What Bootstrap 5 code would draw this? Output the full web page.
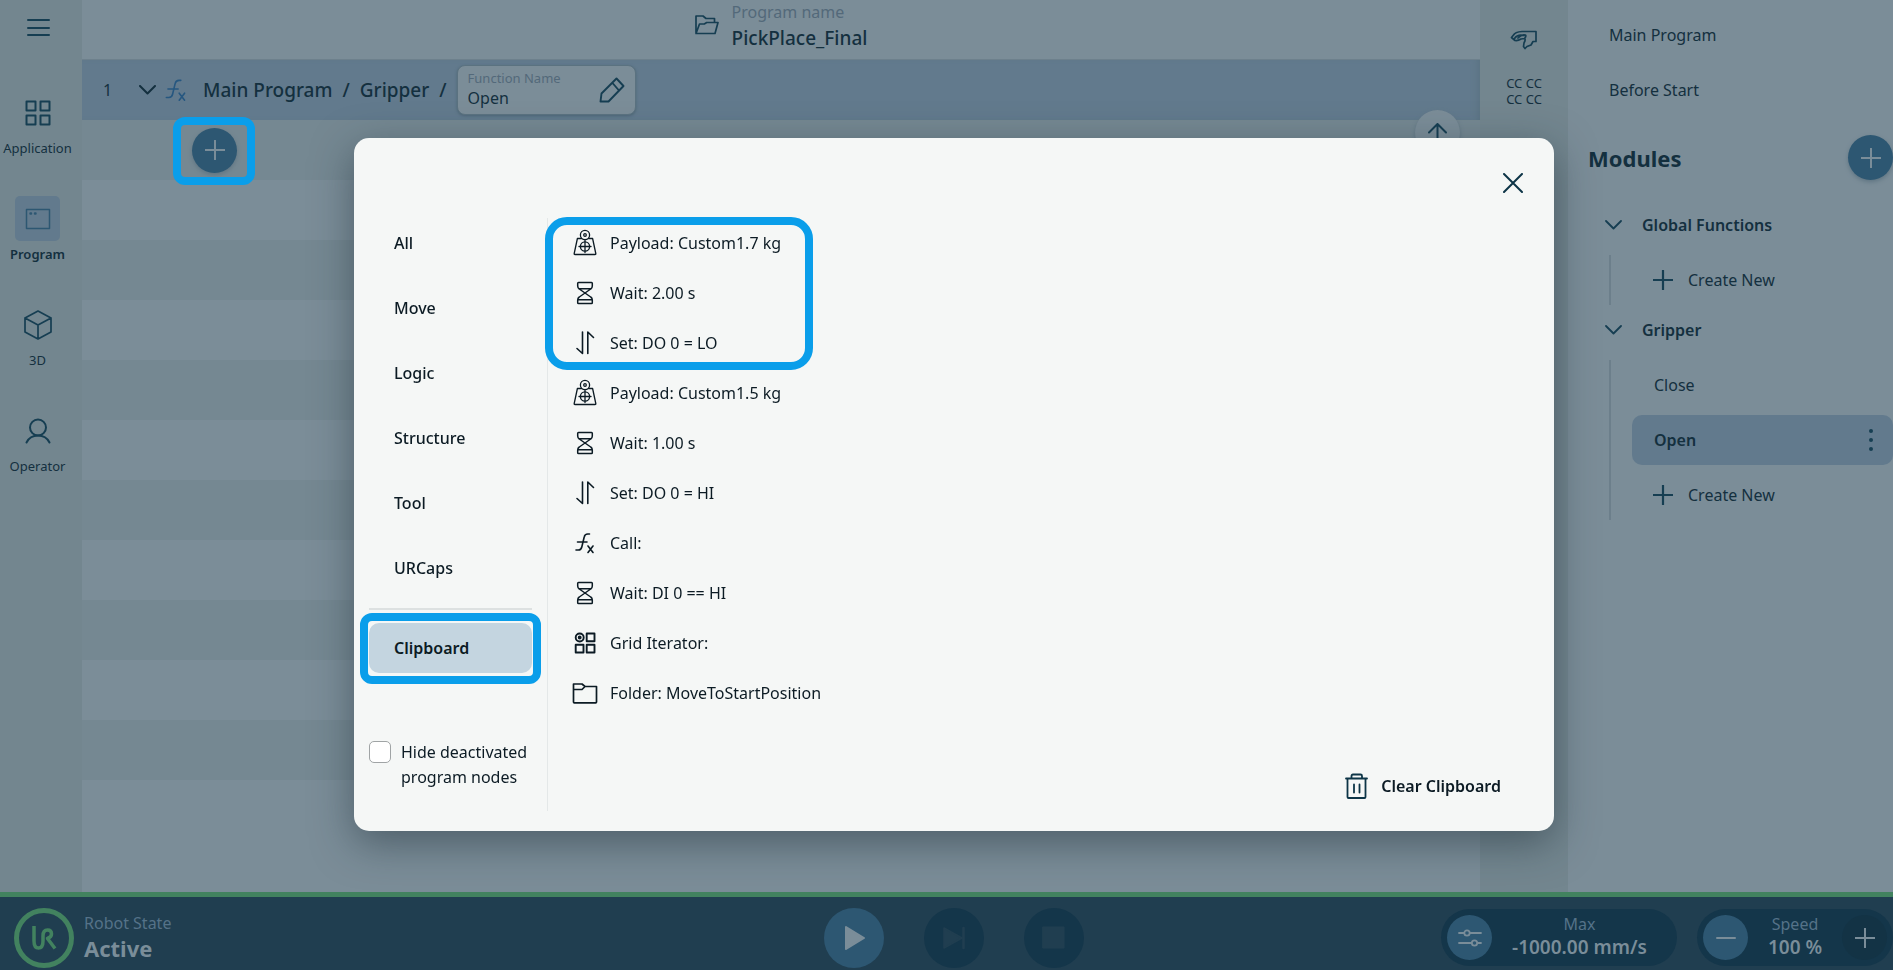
<!DOCTYPE html>
<html lang="en">
<head>
<meta charset="utf-8">
<meta name="viewport" content="width=device-width, initial-scale=1">
<title>PickPlace_Final</title>
<link rel="stylesheet" href="https://cdn.jsdelivr.net/npm/bootstrap@5.3.0/dist/css/bootstrap.min.css">
<style>
:root{--ink:#14303f;--icon:#163e52;--mute:#53697a;--pane:#7b8d98;--stripe:#758892;--rail:#73868f;--sel:#627a8d;--btn:#2d5772;--mark:#0a9eea;--foot:#203e50;--pill:#14364a;--soft:#7a8d99;--green:#42825f}
body{font-family:"Noto Sans",sans-serif;font-size:16px;line-height:24px;color:var(--ink);background:var(--pane);min-height:100vh;overflow:hidden}
svg{display:block;fill:none;stroke:currentColor;stroke-linecap:round;stroke-linejoin:round;flex:none}
button{font:inherit;color:inherit;background:none;border:0;padding:0}
a{color:inherit;text-decoration:none}
.ic{color:var(--icon)}
.solid{fill:currentColor}
.rail{width:82px;background:var(--rail);padding:16px 7px 0 0}
.rail-menu{height:24px;margin-bottom:50px;color:var(--icon)}
.rail-item{height:106px;width:76px;font-size:13px;line-height:20px}
.rail-icon{width:45px;height:45px;border-radius:5px;color:var(--icon);margin-bottom:3px}
.rail-item.active{font-weight:600}
.rail-item.active .rail-icon{background:var(--sel);color:var(--btn)}
.topbar{height:60px;border-bottom:1px solid #6d808c;gap:13px}
.topbar svg{margin-top:15px}
.cap{color:var(--mute)}
.title-name{font-size:19px;line-height:28px;font-weight:500}
.crumbs{height:60px;background:var(--sel);font-size:19px;font-weight:500;padding-left:21px;box-shadow:inset -6px 0 6px -4px #5a7382}
.crumbs .line-no{width:36px;font-size:16px;font-weight:400}
.fx-mark{color:#265780;margin:0 12px 0 5px}
.slash{margin:0 10px}
.fname{width:179px;height:50px;background:var(--pane);border:1px solid #5b7280;border-radius:8px;padding:0 10px;box-shadow:0 1px 3px #4d6675;font-weight:400}
.fname label{font-size:13px;line-height:20px;color:var(--mute)}
.fname input{width:100px;border:0;background:none;padding:0;font-size:16px;line-height:20px;height:20px;color:var(--ink);outline:0}
.prog-row{height:60px}
.prog-row:nth-child(odd){background:var(--stripe)}
.round{width:45px;height:45px;border-radius:50%;background:var(--btn);color:var(--soft);box-shadow:0 2px 4px #5f7583}
.ringed{position:relative}
.ringed::after{content:"";position:absolute;border:8px solid var(--mark);pointer-events:none}
.ring-add{margin-left:110px}
.ring-add::after{inset:-11px -18px -12px -19px;border-radius:12px}
.to-top{position:absolute;right:20px;top:110px;background:var(--pane);color:var(--icon)}
.strip{width:88px;background:var(--rail);padding-top:29px;font-size:13px;line-height:16px}
.modules{width:325px;padding-top:10px}
.m-row{height:50px}
.m-link{padding-left:41px;margin-bottom:5px}
.m-head{margin:20px 0 20px 20px;height:45px}
.m-toggle{margin:0 0 5px 37px;gap:20px;font-weight:600}
.m-row.open{background:var(--sel);border-radius:10px;font-weight:600}
.m-group{border-left:2px solid #6c7f8b;margin-left:41px;padding-left:21px;gap:5px}
.m-group .m-row{padding-left:22px}
.m-group .m-row.new{padding-left:21px;gap:15px}
.m-title{font-size:22px;font-weight:700}
.dots{fill:var(--icon);stroke:none}
.statusbar{height:78px;background:var(--foot);border-top:5px solid var(--green);padding:8px 0 0 14px;color:var(--soft)}
.statusbar .cap{color:#557288}
.side{flex:1 1 0}
.robot{gap:10px}
.logo{color:var(--green)}
.state{font-size:22px;line-height:26px;font-weight:700}
.plays{gap:40px}
.play{width:60px;height:60px;border-radius:50%;background:var(--pill);color:var(--foot)}
.play.on{background:var(--btn);color:var(--soft)}
.pills{gap:20px}
.pill{height:57px;border-radius:29px;background:var(--pill);padding:0 6px}
.pill-max{width:236px}
.pill-speed{width:196px}
.pill .round{box-shadow:none}
.pill .round.off{background:#133345}
.pill .value{font-size:19px;line-height:24px;font-weight:600}
.pill .cap{line-height:22px}
.scrim{position:fixed;inset:0;padding:0 0 2px 15px}
.dialog{width:1200px;background:#f5f7f6;border-radius:15px;padding:80px 53px 20px 15px;color:#0c1b24;box-shadow:0 12px 40px rgba(30,45,55,.5);position:relative}
.close-x{position:absolute;top:30px;right:26px;width:30px;height:30px;color:#0d3547}
.cats{width:179px;border-right:1px solid #e4e8e8;padding:0 15px 21px 0}
.cat-list{gap:15px}
.cat{height:50px;padding-left:25px;font-weight:500;text-align:left;border-radius:10px;width:100%}
.cat.active{background:#c4d5e0;font-weight:600}
.rule{height:2px;margin-bottom:-2px;background:#dde1e1}
.ring-cat::after{inset:-10px -9px -11px -9px;border-radius:12px}
.hide{margin-top:67px;line-height:25px;gap:10px}
.hide .form-check-input{width:22px;height:22px;margin:1px 0 0;border:1px solid #a0a4a5;border-radius:5px;flex:none;background-color:#fff}
.clip{height:50px;padding-left:23px;gap:11px;width:100%}
.clip svg{width:28px;height:28px}
.ring-list{width:260px}
.ring-list::after{inset:-1px -5px -2px -3px;border-radius:22px}
.clear{font-weight:600;gap:11px;height:50px;margin-top:43px}
.clear svg{color:#0d3547}
</style>
</head>
<body class="d-flex flex-column">
<svg width="0" height="0" class="position-absolute" aria-hidden="true">
<symbol id="plus" viewBox="0 0 20 20"><path d="M10 .5v19M.5 10h19"/></symbol>
<symbol id="chev" viewBox="0 0 17 10"><path d="M1 1l7.500 7.500L16 1"/></symbol>
<symbol id="weight" viewBox="0 0 28 28"><circle cx="14" cy="6" r="4.600"/><circle cx="14" cy="6" r="1.300"/><path d="M10.500 9.500H6.400L3.200 24.500q-.2 1 .8 1h20q1 0 .8-1L21.600 9.500h-4.100"/><circle cx="14" cy="17.500" r="4.600"/><path d="M14 11.500v12M8 17.500h12"/></symbol>
<symbol id="glass" viewBox="0 0 28 28"><path d="M7.500 3.500h13q.8 0 .8.800v2.700q0 2-1.600 3L14 14l-5.700-4Q6.700 9 6.700 7V4.300q0-.8.8-.8zM8.200 9.700h11.600M14 14l5.700 4q1.600 1 1.600 3v2.700q0 .8-.8.800h-13q-.8 0-.8-.8V21q0-2 1.600-3zM7 20.700h14"/></symbol>
<symbol id="swap" viewBox="0 0 28 28"><path d="M11.500 3v21.500L6 19.500M16.800 24.500V3l5.700 5.500"/></symbol>
<symbol id="fx" viewBox="0 0 28 28"><path d="M18.500 5h-1.700q-3 0-3.600 3l-2.400 10q-.7 3-3.400 3H5M6.500 13H16M17 17l5 6.500M22 17l-5 6.500"/></symbol>
<symbol id="grid" viewBox="0 0 28 28"><circle cx="8.700" cy="8.500" r="4"/><circle cx="8.700" cy="8.500" r="1" fill="currentColor"/><path d="M15.700 4.500h7.800v7.800h-7.800zM4.700 15.700h7.800v7.800H4.700zM15.700 15.700h7.800v7.800h-7.800z"/></symbol>
<symbol id="folder" viewBox="0 0 28 28"><path d="M2.500 5h8.500l3 2.500h11.500v15.500q0 .8-.8.800H3.300q-.8 0-.8-.8zM2.500 10.500h8.500l3-3"/></symbol>
</svg>

<div class="d-flex flex-grow-1">
  <nav class="rail d-flex flex-column align-items-center" aria-label="Views">
    <button class="rail-menu" aria-label="Menu"><svg width="24" height="24" stroke-width="2"><path d="M2 4h21M2 12h21M2 19h21"/></svg></button>
    <a href="#" class="rail-item d-flex flex-column align-items-center"><span class="rail-icon d-flex align-items-center justify-content-center"><svg width="26" height="26" stroke-width="2"><path d="M1.500 1.500h9v9h-9zM15.500 1.500h9v9h-9zM1.500 15.500h9v9h-9zM15.500 15.500h9v9h-9z"/></svg></span>Application</a>
    <a href="#" class="rail-item active d-flex flex-column align-items-center"><span class="rail-icon d-flex align-items-center justify-content-center"><svg width="26" height="22" stroke-width="1.500"><path d="M1.500 1.500h23v19h-23z"/><path d="M5.500 5.500h.5M10 5.500h.5" stroke-width="2.500"/></svg></span>Program</a>
    <a href="#" class="rail-item d-flex flex-column align-items-center"><span class="rail-icon d-flex align-items-center justify-content-center"><svg width="28" height="30" stroke-width="1.700"><path d="M14 1l13 7v14l-13 7-13-7V8zM1 8l13 7 13-7M14 15v14"/></svg></span>3D</a>
    <a href="#" class="rail-item d-flex flex-column align-items-center"><span class="rail-icon d-flex align-items-center justify-content-center"><svg width="26" height="26" stroke-width="2"><circle cx="13" cy="9.500" r="8"/><path d="M1.500 24.500q3.500-7 11.500-7t11.500 7"/></svg></span>Operator</a>
  </nav>

  <main class="flex-grow-1 position-relative">
    <header class="topbar d-flex justify-content-center">
      <svg width="24" height="20" viewBox="0 0 24 20" stroke-width="1.700" class="ic"><path d="M1 17.500V1h7l3 2.500h8.500v4M1 18.500L4.500 9h4.800l2.400-1.500H23L20 18.500z"/></svg>
      <div><div class="cap">Program name</div><div class="title-name">PickPlace_Final</div></div>
    </header>
    <div class="crumbs d-flex align-items-center">
      <span class="line-no">1</span>
      <button aria-label="Collapse"><svg width="17" height="10" stroke-width="2"><use href="#chev"/></svg></button>
      <svg width="30" height="30" stroke-width="1.500" class="fx-mark"><use href="#fx"/></svg>
      <a href="#">Main Program</a><span class="slash">/</span><a href="#">Gripper</a><span class="slash">/</span>
      <div class="fname d-flex align-items-center justify-content-between">
        <div class="d-flex flex-column pb-1"><label for="fn">Function Name</label><input id="fn" value="Open"></div>
        <button aria-label="Edit name"><svg width="26" height="26" stroke-width="1.900" class="ic"><path d="M1.500 24.500l1-8L17.500 1.500l7 7.500L9.500 24.500zM13.500 6l6.500 7.500"/></svg></button>
      </div>
    </div>
    <div>
      <div class="prog-row d-flex align-items-center"><div class="ringed ring-add"><button class="round d-flex align-items-center justify-content-center" aria-label="Add node"><svg width="20" height="20" stroke-width="2"><use href="#plus"/></svg></button></div></div>
      <div class="prog-row"></div><div class="prog-row"></div><div class="prog-row"></div><div class="prog-row"></div><div class="prog-row"></div><div class="prog-row"></div><div class="prog-row"></div><div class="prog-row"></div><div class="prog-row"></div><div class="prog-row"></div>
    </div>
    <button class="round to-top d-flex align-items-center justify-content-center" aria-label="Move up"><svg width="19" height="20" stroke-width="2"><path d="M9.500 19V1M1 9.500L9.500 1 18 9.500"/></svg></button>
  </main>

  <aside class="strip d-flex flex-column align-items-center">
    <svg width="28" height="22" viewBox="0 0 28 22" stroke-width="1.700" class="ic"><path d="M26 2.500H12Q5 3 3.500 6L1.500 8.500l3.500 3q3 .5 6-1.500l3.500-.5q1.500 1-.5 4.500l-.5 3.500 1.500 2L17 17.500l4-1.500 2-3.500h3zM4.500 9.500q3-4.500 9.500-3M14.500 9.500q2-2 1-3.500-4-1-7.500 3"/></svg>
    <div class="mt-4 text-center">CC CC<br>CC CC</div>
  </aside>

  <aside class="modules">
    <a href="#" class="m-row m-link d-flex align-items-center">Main Program</a>
    <a href="#" class="m-row m-link d-flex align-items-center mb-0">Before Start</a>
    <div class="m-head d-flex align-items-center justify-content-between"><span class="m-title">Modules</span><button class="round d-flex align-items-center justify-content-center" aria-label="Add module"><svg width="20" height="20" stroke-width="2"><use href="#plus"/></svg></button></div>
    <button class="m-row m-toggle d-flex align-items-center"><svg width="17" height="10" stroke-width="1.800" class="ic"><use href="#chev"/></svg>Global Functions</button>
    <div class="m-group"><button class="m-row new d-flex align-items-center"><svg width="20" height="20" stroke-width="2.200" class="ic"><use href="#plus"/></svg>Create New</button></div>
    <button class="m-row m-toggle d-flex align-items-center"><svg width="17" height="10" stroke-width="1.800" class="ic"><use href="#chev"/></svg>Gripper</button>
    <div class="m-group d-flex flex-column"><a href="#" class="m-row d-flex align-items-center">Close</a>
      <div class="m-row open d-flex align-items-center justify-content-between pe-3"><a href="#">Open</a><button aria-label="More"><svg width="12" height="24" class="dots"><circle cx="6" cy="3" r="2"/><circle cx="6" cy="12" r="2"/><circle cx="6" cy="21" r="2"/></svg></button></div>
      <button class="m-row new d-flex align-items-center"><svg width="20" height="20" stroke-width="2.200" class="ic"><use href="#plus"/></svg>Create New</button></div>
  </aside>
</div>

<footer class="statusbar d-flex align-items-center">
  <div class="side robot d-flex align-items-center">
    <svg width="60" height="60" class="logo"><circle cx="30" cy="30" r="27.500" stroke-width="5"/><path d="M20 18v15q0 7 4.500 7t4.500-7v-5q0-6 4.500-6 4 0 4 4 0 3-4 4.500l7.500 10" stroke-width="3.500" stroke-linecap="butt"/></svg>
    <div class="pb-1"><div class="cap">Robot State</div><div class="state">Active</div></div>
  </div>
  <div class="plays d-flex">
    <button class="play on d-flex align-items-center justify-content-center" aria-label="Play"><svg width="24" height="26" stroke-width="2" class="solid"><path d="M4 2l18 11L4 24z"/></svg></button>
    <button class="play d-flex align-items-center justify-content-center" aria-label="Step"><svg width="22" height="24" stroke-width="1.500" class="solid"><path d="M1 2l18 10L1 22z"/><path d="M20.500 2v20" stroke-width="2.500"/></svg></button>
    <button class="play d-flex align-items-center justify-content-center" aria-label="Stop"><svg width="23" height="23" class="solid"><path d="M1 1h21v21H1z"/></svg></button>
  </div>
  <div class="side pills d-flex justify-content-end">
    <div class="pill pill-max d-flex align-items-center"><button class="round d-flex align-items-center justify-content-center" aria-label="Speed limits"><svg width="24" height="18" stroke-width="1.800"><path d="M1 4h5M12 4h11M1 14h12M20 14h3"/><circle cx="9" cy="4" r="2.700"/><circle cx="16.500" cy="14" r="2.700"/></svg></button><div class="text-center flex-grow-1 pe-1 pb-1"><div class="cap">Max</div><div class="value">-1000.00 mm/s</div></div></div>
    <div class="pill pill-speed d-flex align-items-center"><button class="round d-flex align-items-center justify-content-center" aria-label="Slower"><svg width="20" height="20" stroke-width="2"><path d="M1 10h18"/></svg></button><div class="text-center flex-grow-1 pb-1"><div class="cap">Speed</div><div class="value">100 %</div></div><button class="round off d-flex align-items-center justify-content-center" aria-label="Faster"><svg width="20" height="20" stroke-width="2"><use href="#plus"/></svg></button></div>
  </div>
</footer>

<div class="scrim d-flex align-items-center justify-content-center">
  <section class="dialog d-flex" role="dialog" aria-label="Add program node">
    <button class="close-x d-flex align-items-center justify-content-center" aria-label="Close"><svg width="20" height="20" stroke-width="2"><path d="M1 1l18 18M19 1L1 19"/></svg></button>
    <div class="cats">
      <div class="cat-list d-flex flex-column">
        <button class="cat">All</button><button class="cat">Move</button><button class="cat">Logic</button><button class="cat">Structure</button><button class="cat">Tool</button><button class="cat">URCaps</button>
        <div class="rule"></div>
        <div class="ringed ring-cat"><button class="cat active">Clipboard</button></div>
      </div>
      <div class="hide d-flex"><input class="form-check-input" type="checkbox" id="hide"><label for="hide">Hide deactivated program nodes</label></div>
    </div>
    <div class="flex-grow-1 d-flex flex-column">
      <div class="ringed ring-list">
        <button class="clip d-flex align-items-center"><svg stroke-width="1.300"><use href="#weight"/></svg>Payload: Custom1.7 kg</button>
        <button class="clip d-flex align-items-center"><svg stroke-width="1.500"><use href="#glass"/></svg>Wait: 2.00 s</button>
        <button class="clip d-flex align-items-center"><svg stroke-width="1.600"><use href="#swap"/></svg>Set: DO 0 = LO</button>
      </div>
      <button class="clip d-flex align-items-center"><svg stroke-width="1.300"><use href="#weight"/></svg>Payload: Custom1.5 kg</button>
      <button class="clip d-flex align-items-center"><svg stroke-width="1.500"><use href="#glass"/></svg>Wait: 1.00 s</button>
      <button class="clip d-flex align-items-center"><svg stroke-width="1.600"><use href="#swap"/></svg>Set: DO 0 = HI</button>
      <button class="clip d-flex align-items-center"><svg stroke-width="1.600"><use href="#fx"/></svg>Call:</button>
      <button class="clip d-flex align-items-center"><svg stroke-width="1.500"><use href="#glass"/></svg>Wait: DI 0 == HI</button>
      <button class="clip d-flex align-items-center"><svg stroke-width="1.900"><use href="#grid"/></svg>Grid Iterator:</button>
      <button class="clip d-flex align-items-center"><svg stroke-width="1.700"><use href="#folder"/></svg>Folder: MoveToStartPosition</button>
      <div class="d-flex justify-content-end"><button class="clear d-flex align-items-center"><svg width="26" height="28" viewBox="0 0 26 28" stroke-width="1.800"><path d="M2 6.500h21M3.500 6.500V25q0 1 1 1h16q1 0 1-1V6.500M7.500 6V4q0-1.500 1.500-1.500h7.500Q18 2.500 18 4v2M10 12.500v8M15.500 12.500v8"/></svg>Clear Clipboard</button></div>
    </div>
  </section>
</div>
<script src="https://cdn.jsdelivr.net/npm/bootstrap@5.3.0/dist/js/bootstrap.bundle.min.js"></script>
</body>
</html>
